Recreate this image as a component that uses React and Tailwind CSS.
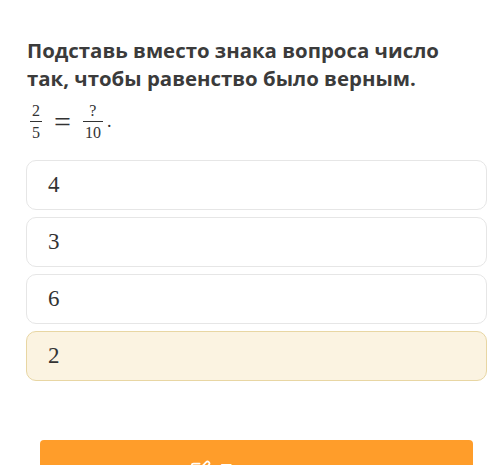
import { FiEdit } from "react-icons/fi";

const Frac = ({ top, bottom }) => (
  <span className="inline-flex flex-col items-center text-[16px] leading-[15px] mx-[3px]">
    <span className="px-[2px] pb-[3px]">{top}</span>
    <span className="self-stretch h-px bg-[#333]" />
    <span className="px-[2px] pt-[3px]">{bottom}</span>
  </span>
);

const answers = ["4", "3", "6", "2"];

const App = () => {
  const selected = 3;

  return (
    <div className="w-[500px] h-[465px] overflow-hidden bg-white">
      <div className="pt-[36px] pl-[27px]">
        <h1 className="w-[430px] font-['Open_Sans',sans-serif] font-bold text-[20.4px] leading-[28px] text-[#3b3b3b]">
          Подставь вместо знака вопроса число так, чтобы равенство было верным.
        </h1>
        <div className="mt-[11px] flex items-center font-['Liberation_Serif',serif] text-[#333]">
          <Frac top="2" bottom="5" />
          <span className="mx-[9px] text-[30px] leading-none">=</span>
          <Frac top="?" bottom="10" />
          <span className="text-[18px] self-end mb-[5px] ml-px">.</span>
        </div>
      </div>

      {/* Options */}
      <div className="mt-[20px] ml-[26px] w-[461px] flex flex-col gap-[7px]">
        {answers.map((a, i) => (
          <div
            key={a}
            className={`h-[50px] rounded-[10px] border flex items-center pl-[21px] font-['Liberation_Serif',serif] text-[23px] text-[#333] ${
              i === selected
                ? "bg-[#fbf3e1] border-[#e8d6a3]"
                : "bg-white border-[#e6e6e6]"
            }`}
          >
            {a}
          </div>
        ))}
      </div>

      {/* Button */}
      <div className="mt-[59px] ml-[40px] w-[433px] h-[60px] rounded-[4px] bg-[#ff9d2a] flex items-center justify-center gap-[9px] text-white">
        <FiEdit size={21} />
        <span className="font-['Open_Sans',sans-serif] font-bold text-[18px]">Проверить</span>
      </div>
    </div>
  );
};

export default App;
